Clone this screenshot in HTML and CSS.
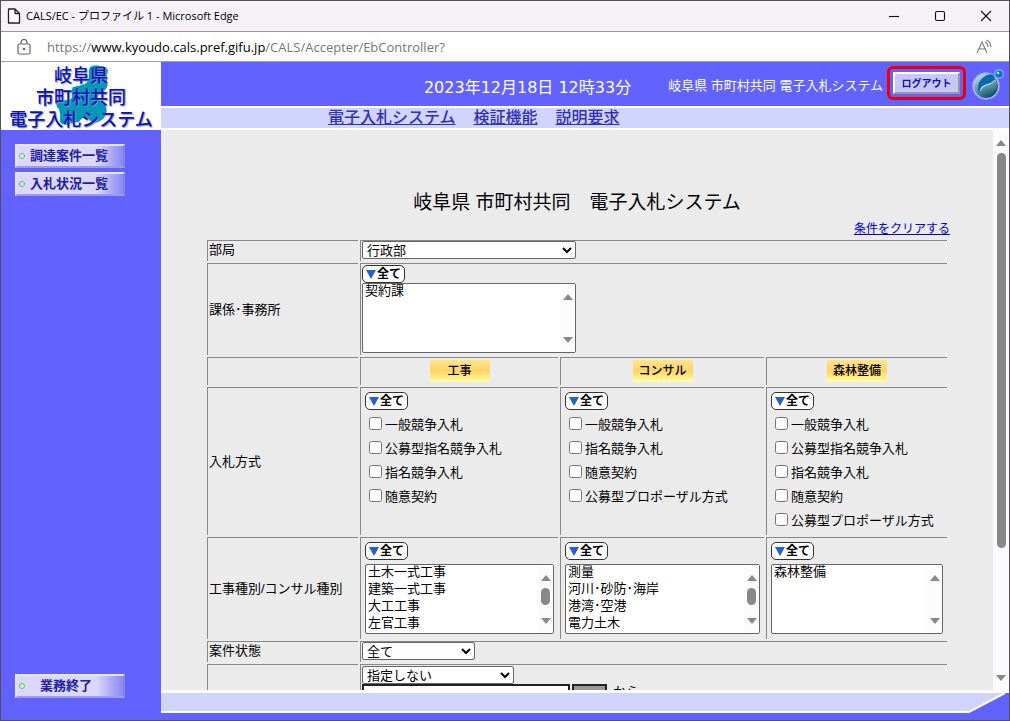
FILE: index.html
```html
<!DOCTYPE html>
<html lang="ja">
<head>
    <meta charset="utf-8">
    <title>CALS/EC</title>
    <link rel="stylesheet" href="styles.css">
</head>
<body>
<div class="window">
    <div class="titlebar">
        <svg class="page-icon" width="14" height="16" viewBox="0 0 14 16"><path d="M1.5 1h6.500l4.500 4.500v9.500h-11z M8 1v4.500h4.500" fill="#fff" stroke="#222" stroke-width="1.300" stroke-linejoin="round"/></svg>
        <span class="window-title">CALS/EC - プロファイル 1 - Microsoft Edge</span>
        <svg class="window-buttons" width="104" height="12" viewBox="0 0 104 12" fill="none" stroke="#111" stroke-width="1.100"><path d="M1 6.500h10"/><rect x="47.500" y="1.500" width="9" height="9" rx="1.500"/><path d="M93 1l10 10M103 1l-10 10"/></svg>
    </div>
    <div class="addressbar">
        <svg width="14" height="16" viewBox="0 0 14 16" fill="none" stroke="#666" stroke-width="1.200"><rect x="1" y="5" width="12" height="10" rx="1.500"/><path d="M4 5v-1.500a3 3 0 0 1 6 0v1.500"/><circle cx="7" cy="10" r=".7" fill="#666"/></svg>
        <span class="url">https://<b>www.kyoudo.cals.pref.gifu.jp</b>/CALS/Accepter/EbController?</span>
        <svg width="17" height="16" viewBox="0 0 17 16" fill="none" stroke="#777" stroke-width="1.100"><path d="M1 14L6 3l5 11M2.700 10h6.600M9 3q3 1 3 5M10.500 1q4 2 4.500 7"/></svg>
    </div>

    <div class="page">
        <div class="sidebar">
            <div class="logo">
                <svg class="map" width="56" height="62" viewBox="0 0 56 62"><path d="M35 3q5-3 10-1 7 0 8 5-2 4-1 9 2 6-2 10-6 2-7 7 1 4 6 6 4 4 2 12-3 6-11 8-5-1-8-6-5 0-8 5-8 1-12 3-5 0-7-3 1-7-1-13-4-3-2-7 3-3 7-2 7 1 8-3-1-7 1-10 6-1 12-3 4-3 4-8-1-5 1-9z" fill="#0099b8"/></svg>
                <div class="logo-text">岐阜県<br>市町村共同<br>電子入札システム</div>
            </div>
            <div class="menu">
                <button type="button" class="menu-btn"><i></i><span>調達案件一覧</span></button>
                <button type="button" class="menu-btn"><i></i><span>入札状況一覧</span></button>
            </div>
            <button type="button" class="menu-btn end-btn"><i></i><span>業務終了</span></button>
        </div>

        <div class="main">
            <div class="header">
                <div class="clock">2023年12月18日 12時33分</div>
                <div class="header-right">
                    <span class="system">岐阜県 市町村共同 電子入札システム</span>
                    <span class="highlight"><button type="button" class="logout">ログアウト</button></span>
                    <svg width="36" height="36" viewBox="0 0 36 36">
                        <defs>
                            <radialGradient id="halo"><stop offset=".8" stop-color="#dfe2ff"/><stop offset="1" stop-color="#8080ff"/></radialGradient>
                            <linearGradient id="globe" x1="0" y1="0" x2=".7" y2="1"><stop offset="0" stop-color="#e4f0f4"/><stop offset=".4" stop-color="#78a8b8"/><stop offset="1" stop-color="#084a60"/></linearGradient>
                            <linearGradient id="ball" x1="0" y1="0" x2=".4" y2="1"><stop offset="0" stop-color="#a8ccd4"/><stop offset="1" stop-color="#186078"/></linearGradient>
                        </defs>
                        <circle cx="16" cy="20" r="14" fill="url(#halo)"/>
                        <circle cx="16" cy="20" r="12" fill="url(#globe)"/>
                        <path d="M8 24Q7 16 14 11q5-4 9-2 3 2 1 6-3 3-8 4-5 2-6 7-2 0-2-2z" fill="#0868b0"/>
                        <path d="M10 25q1-5 6-6 7-1 10-5 2 7-2 12-7 5-12 3-2-2-2-4z" fill="url(#ball)"/>
                        <path d="M10 25q1-5 6-6 6-1 9-5" fill="none" stroke="#d8f0f8" stroke-width="1"/>
                        <circle cx="29" cy="8" r="5" fill="#8aa0ff"/><circle cx="29" cy="8" r="3.600" fill="#0878b0"/><circle cx="28" cy="7" r="1.300" fill="#b8e4ff"/>
                    </svg>
                </div>
            </div>
            <div class="nav">
                <a href="#">電子入札システム</a>
                <a href="#">検証機能</a>
                <a href="#">説明要求</a>
            </div>

            <div class="content">
                <div class="scroll-area">
                    <h1>岐阜県 市町村共同　電子入札システム</h1>
                    <div class="clear"><a href="#">条件をクリアする</a></div>
                    <table class="search">
                        <colgroup><col class="c1"><col class="c2"><col class="c3"><col class="c4"></colgroup>
                        <tr class="line">
                            <th><label for="bukyoku">部局</label></th>
                            <td colspan="3"><select id="bukyoku" class="wide"><option>行政部</option></select></td>
                        </tr>
                        <tr class="office">
                            <th><label for="kakari">課係･事務所</label></th>
                            <td colspan="3">
                                <button type="button" class="all"><i></i>全て</button>
                                <div class="list wide">
                                    <select id="kakari" size="4" multiple><option>契約課</option></select>
                                    <span class="bar"><i class="up"></i><i class="down"></i></span>
                                </div>
                            </td>
                        </tr>
                        <tr class="kinds">
                            <th></th>
                            <td><span class="kind">工事</span></td>
                            <td><span class="kind">コンサル</span></td>
                            <td><span class="kind">森林整備</span></td>
                        </tr>
                        <tr class="methods">
                            <th>入札方式</th>
                            <td>
                                <button type="button" class="all"><i></i>全て</button>
                                <label><input type="checkbox">一般競争入札</label>
                                <label><input type="checkbox">公募型指名競争入札</label>
                                <label><input type="checkbox">指名競争入札</label>
                                <label><input type="checkbox">随意契約</label>
                            </td>
                            <td>
                                <button type="button" class="all"><i></i>全て</button>
                                <label><input type="checkbox">一般競争入札</label>
                                <label><input type="checkbox">指名競争入札</label>
                                <label><input type="checkbox">随意契約</label>
                                <label><input type="checkbox">公募型プロポーザル方式</label>
                            </td>
                            <td>
                                <button type="button" class="all"><i></i>全て</button>
                                <label><input type="checkbox">一般競争入札</label>
                                <label><input type="checkbox">公募型指名競争入札</label>
                                <label><input type="checkbox">指名競争入札</label>
                                <label><input type="checkbox">随意契約</label>
                                <label><input type="checkbox">公募型プロポーザル方式</label>
                            </td>
                        </tr>
                        <tr class="types">
                            <th>工事種別/コンサル種別</th>
                            <td>
                                <button type="button" class="all"><i></i>全て</button>
                                <div class="list">
                                    <select size="4" multiple aria-label="工事種別"><option>土木一式工事</option><option>建築一式工事</option><option>大工工事</option><option>左官工事</option></select>
                                    <span class="bar"><i class="up"></i><i class="thumb"></i><i class="down"></i></span>
                                </div>
                            </td>
                            <td>
                                <button type="button" class="all"><i></i>全て</button>
                                <div class="list">
                                    <select size="4" multiple aria-label="コンサル種別"><option>測量</option><option>河川･砂防･海岸</option><option>港湾･空港</option><option>電力土木</option></select>
                                    <span class="bar"><i class="up"></i><i class="thumb"></i><i class="down"></i></span>
                                </div>
                            </td>
                            <td>
                                <button type="button" class="all"><i></i>全て</button>
                                <div class="list">
                                    <select size="4" multiple aria-label="森林整備"><option>森林整備</option></select>
                                    <span class="bar"><i class="up"></i><i class="down"></i></span>
                                </div>
                            </td>
                        </tr>
                        <tr class="line">
                            <th><label for="joutai">案件状態</label></th>
                            <td colspan="3"><select id="joutai" class="state"><option>全て</option></select></td>
                        </tr>
                        <tr class="date">
                            <th></th>
                            <td colspan="3">
                                <select class="term" aria-label="日付"><option>指定しない</option></select>
                                <div class="from"><input type="text" aria-label="開始日"><button type="button" aria-label="カレンダー"></button><span>から</span></div>
                            </td>
                        </tr>
                    </table>
                </div>
                <div class="page-scroll"><i class="up"></i><i class="thumb"></i><i class="down"></i></div>
            </div>

            <div class="footer">
                <div class="footer-bar"></div>
                <svg width="42" height="20" viewBox="0 0 42 20"><path d="M0 0h38L2 19H0z" fill="#d0d4ff"/><path d="M0 19h2L38 0" fill="none" stroke="#fff" stroke-width="2"/></svg>
            </div>
        </div>
    </div>
</div>
</body>
</html>
```
FILE: styles.css
```css
* {
    box-sizing: border-box;
}

body {
    margin: 0;
    font-family: "Liberation Sans", "Noto Sans CJK JP", sans-serif;
    font-size: 13px;
    color: #000;
}

button {
    font-family: inherit;
    padding: 0;
}

.window {
    display: flex;
    flex-direction: column;
    height: 100vh;
    border: 1px solid #555058;
    overflow: hidden;
}

/* browser frame */
.titlebar {
    display: flex;
    align-items: center;
    height: 31px;
    padding: 0 17px 0 6px;
    gap: 5px;
    background: #f6f1f7;
    border-bottom: 1px solid #999;
    font: 11px/16px "Open Sans", "Noto Sans CJK JP", sans-serif;
}

.window-buttons {
    margin-left: auto;
}

.addressbar {
    display: flex;
    align-items: center;
    height: 30px;
    padding: 0 16px;
    gap: 16px;
    background: #fff;
    border-bottom: 1px solid #a0a49c;
    font: 13px/20px "Open Sans", sans-serif;
    color: #777;
}

.url {
    flex: 1;
}

.url b {
    font-weight: normal;
    color: #000;
}

.page {
    flex: 1;
    display: flex;
    min-height: 0;
    background: #6262ff;
}

/* left menu */
.sidebar {
    display: flex;
    flex-direction: column;
    width: 160px;
    flex-shrink: 0;
}

.logo {
    position: relative;
    height: 68px;
    background: #fff;
    overflow: hidden;
}

.map {
    position: absolute;
    left: 54px;
    top: 2px;
}

.logo-text {
    position: relative;
    padding-top: 3px;
    font-size: 18px;
    font-weight: 500;
    line-height: 22px;
    text-align: center;
    white-space: nowrap;
    color: #0a14b4;
    text-shadow: 1px 1px 1px #8890c8;
}

.menu {
    flex: 1;
    display: flex;
    flex-direction: column;
    gap: 4px;
    padding: 14px;
}

.menu-btn {
    display: flex;
    align-items: center;
    width: 110px;
    height: 24px;
    padding: 0 2px;
    border: 2px solid;
    border-color: #e4e4ff #8484e0 #9c9ce0 #e4e4ff;
    background: linear-gradient(to right, #dcd8fc 75%, #8888f4);
    font-size: 13px;
    font-weight: bold;
    line-height: 18px;
    color: #2020a0;
}

.menu-btn i {
    width: 6px;
    height: 6px;
    border-radius: 50%;
    border: 1px solid #70b080;
    background: #c8ffc8;
}

.menu-btn span {
    flex: 1;
    padding-right: 8px;
}

.end-btn {
    margin: 0 14px 22px;
}

.end-btn span {
    padding-right: 14px;
}

/* header */
.main {
    flex: 1;
    display: flex;
    flex-direction: column;
    min-width: 0;
}

.header {
    display: flex;
    justify-content: flex-end;
    align-items: center;
    height: 46px;
    padding-right: 3px;
    border-bottom: 2px solid #fff;
    color: #fff;
}

.clock {
    margin: 8px 37px 0 0;
    font: 16px/24px "DejaVu Sans", "Noto Sans CJK JP", sans-serif;
    white-space: nowrap;
}

.header-right {
    display: flex;
    align-items: center;
    gap: 4px;
    white-space: nowrap;
}

.highlight {
    display: flex;
    padding: 3px;
    border: 3px solid #f00000;
    border-radius: 6px;
    margin-bottom: 3px;
}

.logout {
    width: 67px;
    height: 22px;
    border: 2px solid;
    border-color: #fff #989898 #989898 #fff;
    background: #c8c8ff;
    font-size: 10px;
    font-weight: bold;
    color: #1010b0;
}

.nav {
    display: flex;
    align-items: center;
    gap: 18px;
    height: 22px;
    padding-left: 167px;
    background: #d0d4ff;
    border-bottom: 2px solid #fff;
    font-size: 16px;
    font-weight: 500;
    line-height: 20px;
}

.nav a {
    color: #3030b8;
}

/* search form */
.content {
    flex: 1;
    display: flex;
    min-height: 0;
    background: #ebebeb;
    border-bottom: 3px solid #fff;
}

.scroll-area {
    flex: 1;
    overflow: hidden;
}

h1 {
    margin: 59px 0 3px;
    font-size: 19px;
    font-weight: normal;
    line-height: 28px;
    text-align: center;
}

.clear {
    margin: 0 43px;
    font-size: 12px;
    line-height: 18px;
    text-align: right;
}

.clear a {
    color: #0000d8;
}

.search {
    width: calc(100% - 88px);
    margin: 0 auto;
    table-layout: fixed;
    border-spacing: 2px;
}

.c1 {
    width: 151px;
}

.c2 {
    width: 198px;
}

.c3 {
    width: 204px;
}

th, td {
    padding: 1px;
    border: solid #888;
    border-width: 1px 0 0 1px;
    line-height: 18px;
}

th {
    font-weight: normal;
    text-align: left;
}

td {
    vertical-align: top;
}

.line th {
    vertical-align: top;
    padding: 0 1px;
}

.line td {
    height: 21px;
    padding-top: 0;
}

.office td {
    height: 92px;
}

.kinds td {
    height: 28px;
    padding: 2px;
    text-align: center;
}

.methods td {
    height: 148px;
    padding: 4px 4px 2px;
}

.types td {
    height: 102px;
    padding: 4px;
}

.date td {
    height: 60px;
}

select {
    display: block;
    height: 18px;
    padding: 0;
    border: 1px solid #666;
    border-radius: 2px;
    background: #fff;
    font: 13px/16px "Liberation Sans", "Noto Sans CJK JP", sans-serif;
    color: #000;
}

.wide {
    width: 214px;
}

.state {
    width: 113px;
}

.term {
    width: 152px;
}

.all {
    display: flex;
    align-items: center;
    gap: 1px;
    width: 43px;
    height: 18px;
    padding: 0 3px;
    border: 1px solid #333;
    border-radius: 5px;
    background: #fff;
    font-size: 12px;
    font-weight: bold;
    line-height: 16px;
    white-space: nowrap;
    color: #000;
}

.all i {
    border: solid transparent;
    border-width: 9px 5px 0;
    border-top-color: #2060d0;
}

.list {
    position: relative;
}

.types .list {
    margin-top: 4px;
}

.list select {
    width: 100%;
    height: 70px;
    overflow: hidden;
}

.list option {
    margin-top: -2px;
    padding: 0 2px;
}

.list option:first-child {
    margin-top: -4px;
}

/* scroll bar over the right edge of a list */
.bar {
    position: absolute;
    top: 1px;
    right: 1px;
    bottom: 1px;
    display: flex;
    flex-direction: column;
    align-items: center;
    width: 15px;
    padding: 10px 0 9px;
    background: #fcfcfc;
}

.up, .down {
    border: solid transparent;
    border-width: 0 5px 6px;
    border-bottom-color: #888;
}

.down {
    margin-top: auto;
    border-width: 6px 5px 0;
    border-top-color: #888;
}

.bar .thumb {
    width: 9px;
    height: 17px;
    margin-top: 7px;
    border-radius: 5px;
    background: #888;
}

.kind {
    display: inline-block;
    min-width: 60px;
    height: 22px;
    background: linear-gradient(#ffe48c, #ffd466 50%, #ffffa0);
    font-size: 12px;
    font-weight: 500;
    line-height: 22px;
}

.methods label {
    display: flex;
    align-items: center;
    height: 24px;
    white-space: nowrap;
}

.methods .all {
    margin-bottom: 3px;
}

.methods input {
    width: 13px;
    height: 13px;
    margin: 0 3px 3px 4px;
}

.from {
    display: flex;
    gap: 2px;
}

.from input {
    width: 208px;
    height: 22px;
    border: 2px solid #222;
}

.from button {
    width: 35px;
    height: 22px;
    border: 2px solid #222;
    background: #999;
}

.from span {
    padding-left: 4px;
    line-height: 16px;
}

.page-scroll {
    display: flex;
    flex-direction: column;
    align-items: center;
    width: 16px;
    padding: 10px 0 9px;
    background: #fbfafc;
}

.page-scroll .thumb {
    flex: 0 0 73%;
    width: 9px;
    margin-top: 7px;
    border-radius: 5px;
    background: #888;
}

.footer {
    display: flex;
    height: 27px;
}

.footer-bar {
    flex: 1;
    height: 20px;
    background: #d0d4ff;
    border-bottom: 2px solid #fff;
}
```
